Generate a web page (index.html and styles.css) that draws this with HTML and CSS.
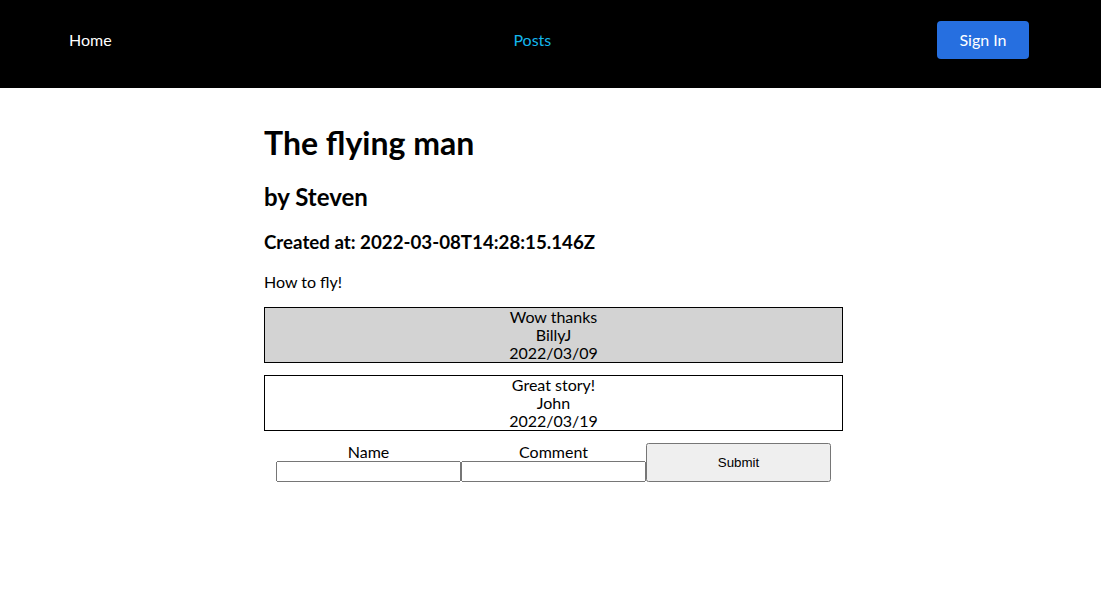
FILE: index.html
```html
<!DOCTYPE html>
<html lang="en">
<head>
  <meta charset="UTF-8" />
  <meta name="viewport" content="width=device-width, initial-scale=1.0"/>
  <title>The flying man</title>
  <link rel="stylesheet" href="styles.css">
</head>
<body>
  <nav class="navbar">
    <a class="nav-link" href="#">Home</a>
    <a class="nav-link active" href="#">Posts</a>
    <button class="sign-in">Sign In</button>
  </nav>

  <main class="post">
    <h1>The flying man</h1>
    <h2>by Steven</h2>
    <h3>Created at: 2022-03-08T14:28:15.146Z</h3>
    <p>How to fly!</p>

    <div class="comments">
      <div class="comment odd">
        <div>Wow thanks</div>
        <div>BillyJ</div>
        <div>2022/03/09</div>
      </div>
      <div class="comment">
        <div>Great story!</div>
        <div>John</div>
        <div>2022/03/19</div>
      </div>
    </div>

    <form class="comment-form" onsubmit="return false">
      <label class="field">
        Name
        <input type="text" name="name">
      </label>
      <label class="field">
        Comment
        <input type="text" name="comment">
      </label>
      <button type="submit" class="submit">Submit</button>
    </form>
  </main>
</body>
</html>
```

FILE: styles.css
```css
body {
  margin: 0;
  font-family: Lato, 'Noto Sans', sans-serif;
  color: #000;
  background: #fff;
}

.navbar {
  background: #000;
  height: 88px;
  box-sizing: border-box;
  padding: 21px 72px 29px 69px;
  display: flex;
  justify-content: space-between;
  align-items: center;
}

.nav-link {
  color: #fff;
  text-decoration: none;
  font-size: 16px;
  padding-bottom: 2px;
}

.nav-link.active {
  color: #14b6ec;
  margin-left: 16px;
}

.sign-in {
  background: #266fe0;
  color: #fff;
  border: none;
  border-radius: 4px;
  font-family: inherit;
  font-size: 16px;
  width: 92px;
  height: 38px;
  padding: 0 0 2px;
}

.post {
  width: 579px;
  margin: 0 0 0 264px;
  padding-top: 16px;
}

h1 {
  font-size: 32px;
  line-height: 36px;
  margin: 21px 0 22px;
}

h2 {
  font-size: 24px;
  line-height: 27px;
  margin: 22px 0;
}

h3 {
  font-size: 18.72px;
  line-height: 21px;
  margin: 20px 0;
}

p {
  font-size: 16px;
  line-height: 18px;
  margin: 20px 0 16px;
}

.comments {
  display: flex;
  flex-direction: column;
  gap: 12px;
}

.comment {
  border: 1px solid #000;
  text-align: center;
  line-height: 18px;
}

.comment.odd {
  background: #d3d3d3;
}

.comment-form {
  display: flex;
  justify-content: center;
  margin-top: 12px;
}

.field {
  display: flex;
  flex-direction: column;
  align-items: center;
  width: 185px;
  line-height: 18px;
}

.field input {
  width: 100%;
  box-sizing: border-box;
  height: 21px;
  margin: 0;
}

.submit {
  width: 185px;
  height: 39px;
  margin: 0;
}
```
